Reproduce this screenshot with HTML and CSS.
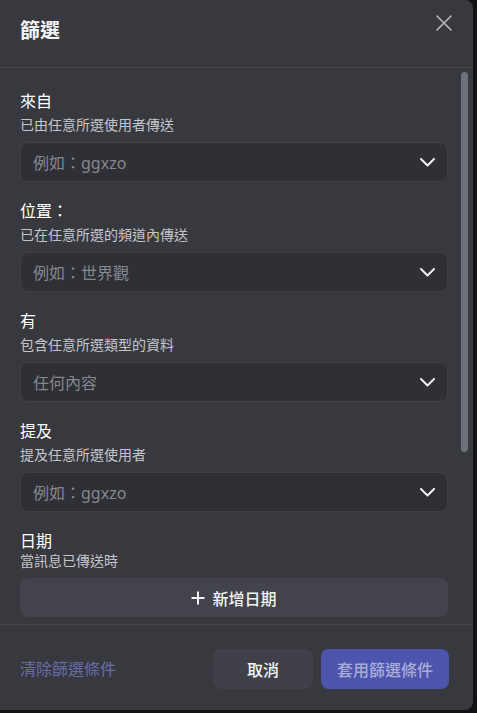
FILE: index.html
```html
<!DOCTYPE html>
<html lang="zh-TW">
<head>
    <meta charset="utf-8">
    <title>篩選</title>
    <link rel="stylesheet" href="styles.css">
</head>

<body>
    <div class="modal">
        <div class="head">
            <p class="headTitle">篩選</p>
            <svg class="close" width="16" height="16" viewBox="0 0 16 16">
                <path d="M1 1L15 15M15 1L1 15" stroke="#b5b7bd" stroke-width="1.6" stroke-linecap="round"/>
            </svg>
        </div>

        <div class="main">
            <div class="field">
                <p class="label">來自</p>
                <p class="sub">已由任意所選使用者傳送</p>
                <div class="select">
                    <span class="hint">例如：ggxzo</span>
                    <svg width="15" height="9" viewBox="0 0 15 9"><path d="M1 1L7.5 7.5L14 1" fill="none" stroke="#f2f3f5" stroke-width="2" stroke-linecap="round" stroke-linejoin="round"/></svg>
                </div>
            </div>
            <div class="field">
                <p class="label">位置：</p>
                <p class="sub">已在任意所選的頻道內傳送</p>
                <div class="select">
                    <span class="hint">例如：世界觀</span>
                    <svg width="15" height="9" viewBox="0 0 15 9"><path d="M1 1L7.5 7.5L14 1" fill="none" stroke="#f2f3f5" stroke-width="2" stroke-linecap="round" stroke-linejoin="round"/></svg>
                </div>
            </div>
            <div class="field">
                <p class="label">有</p>
                <p class="sub">包含任意所選類型的資料</p>
                <div class="select">
                    <span class="hint">任何內容</span>
                    <svg width="15" height="9" viewBox="0 0 15 9"><path d="M1 1L7.5 7.5L14 1" fill="none" stroke="#f2f3f5" stroke-width="2" stroke-linecap="round" stroke-linejoin="round"/></svg>
                </div>
            </div>
            <div class="field">
                <p class="label">提及</p>
                <p class="sub">提及任意所選使用者</p>
                <div class="select">
                    <span class="hint">例如：ggxzo</span>
                    <svg width="15" height="9" viewBox="0 0 15 9"><path d="M1 1L7.5 7.5L14 1" fill="none" stroke="#f2f3f5" stroke-width="2" stroke-linecap="round" stroke-linejoin="round"/></svg>
                </div>
            </div>
            <div class="field">
                <p class="label">日期</p>
                <p class="sub sub-tight">當訊息已傳送時</p>
                <div class="addDate">
                    <svg width="14" height="14" viewBox="0 0 14 14"><path d="M7 0.5V13.5M0.5 7H13.5" stroke="#f2f3f5" stroke-width="2"/></svg>
                    <span>新增日期</span>
                </div>
            </div>
        </div>

        <div class="foot">
            <span class="clear">清除篩選條件</span>
            <span class="btn btn-cancel">取消</span>
            <span class="btn btn-apply">套用篩選條件</span>
        </div>

        <div class="thumb"></div>
    </div>
</body>
</html>
```

FILE: styles.css
```css
*{margin:0; padding:0; box-sizing:border-box;}
body{
    background:#111214;
    font-family:"Noto Sans","Noto Sans CJK TC",sans-serif;
    color:#f2f3f5;
}
.modal{
    position:relative;
    width:473px; height:710px;
    background:#38393f;
    border-radius:0 8px 8px 0;
    display:flex; flex-direction:column;
    overflow:hidden;
}
.head{
    height:68px;
    padding:18px 20px 0;
    border-bottom:1px solid #45464c;
    display:flex; justify-content:space-between; align-items:flex-start;
}
.head .headTitle{
    font-size:20px; line-height:26px; font-weight:700;
}
.close{margin-top:-3px; margin-right:1px;}
.main{
    height:556px;
    padding:23px 25px 0 20px;
    overflow:hidden;
}
.field{padding-bottom:19px;}
.label{
    font-size:16px; line-height:20px; font-weight:400;
    color:#ffffff;
}
.sub{
    margin-top:5px;
    font-size:14px; line-height:18px;
    color:#c4c5cb;
}
.sub-tight{margin-top:1px;}
.select{
    margin-top:8px;
    height:40px;
    padding:0 12px;
    background:#2f3036;
    border:1px solid #404148;
    border-radius:8px;
    display:flex; justify-content:space-between; align-items:center;
}
.hint{
    font-size:16px;
    color:#85878f;
}
.addDate{
    margin-top:8px;
    height:39px;
    background:#43444b;
    border-radius:8px;
    display:flex; justify-content:center; align-items:center; gap:7px;
    font-size:16px; font-weight:500;
}
.foot{
    flex:1;
    border-top:1px solid #45464c;
    padding:24px 24px 0 20px;
    display:flex; align-items:flex-start; gap:8px;
}
.clear{
    margin-right:auto;
    line-height:40px;
    font-size:16px;
    color:#676ca8;
}
.btn{
    height:40px;
    border-radius:8px;
    display:flex; justify-content:center; align-items:center;
    font-size:16px; font-weight:500;
}
.btn-cancel{
    width:100px;
    background:#404148;
    color:#f2f3f5;
}
.btn-apply{
    width:128px;
    background:#4d54ad;
    color:#a9acd6;
}
.thumb{
    position:absolute;
    top:72px; right:5px;
    width:7px; height:380px;
    border-radius:4px;
    background:#6f7179;
}
```
